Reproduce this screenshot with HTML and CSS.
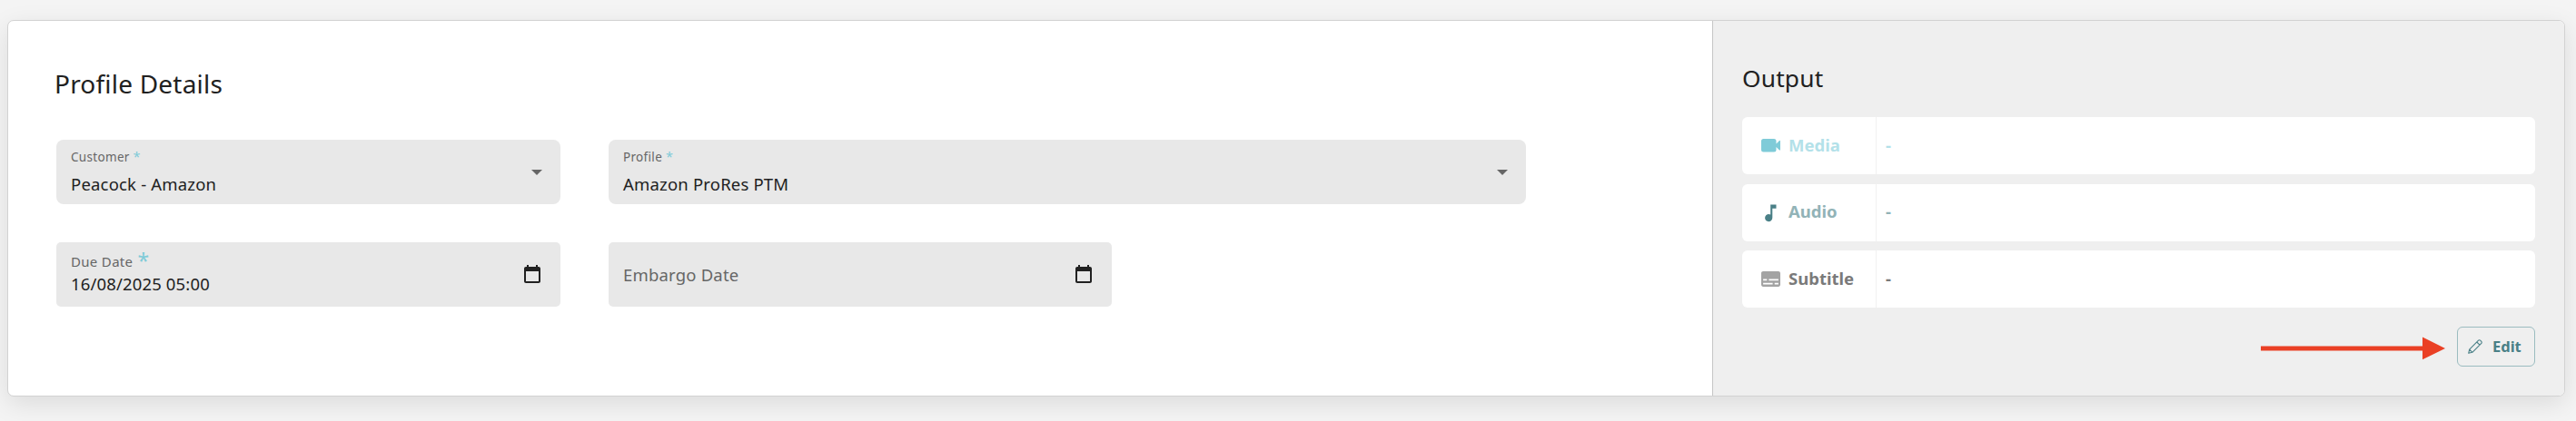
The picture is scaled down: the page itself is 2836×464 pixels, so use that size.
FILE: index.html
```html
<!DOCTYPE html>
<html lang="en">
<head>
<meta charset="utf-8">
<title>Profile Details</title>
<link rel="stylesheet" href="styles.css">
</head>
<body>
<main class="card">
  <section class="details">
    <h2 class="title">Profile Details</h2>
    <div class="fields">
      <div class="field select">
        <div class="text"><span class="label">Customer <i class="req">*</i></span><span class="value">Peacock - Amazon</span></div>
        <svg class="caret" viewBox="0 0 12 6"><path d="M0 0h12L6 6z"/></svg>
      </div>
      <div class="field select wide">
        <div class="text"><span class="label">Profile <i class="req">*</i></span><span class="value">Amazon ProRes PTM</span></div>
        <svg class="caret" viewBox="0 0 12 6"><path d="M0 0h12L6 6z"/></svg>
      </div>
      <div class="field date">
        <div class="text"><span class="label">Due Date <i class="req">*</i></span><span class="value">16/08/2025 05:00</span></div>
        <svg class="calendar" viewBox="0 0 24 24"><path d="M19 3h-1V1h-2v2H8V1H6v2H5c-1.11 0-1.99.9-1.99 2L3 19c0 1.1.89 2 2 2h14c1.1 0 2-.9 2-2V5c0-1.1-.9-2-2-2zm0 16H5V8h14v11z"/></svg>
      </div>
      <div class="field date">
        <span class="placeholder">Embargo Date</span>
        <svg class="calendar" viewBox="0 0 24 24"><path d="M19 3h-1V1h-2v2H8V1H6v2H5c-1.11 0-1.99.9-1.99 2L3 19c0 1.1.89 2 2 2h14c1.1 0 2-.9 2-2V5c0-1.1-.9-2-2-2zm0 16H5V8h14v11z"/></svg>
      </div>
    </div>
  </section>
  <aside class="output">
    <h2 class="title">Output</h2>
    <div class="rows">
      <div class="row media">
        <div class="kind"><svg class="icon" viewBox="0 0 21 21"><path d="M2.500 3h11.500a2.500 2.500 0 0 1 2.500 2.500V8.500L20 5a.6.6 0 0 1 1 .4v9.700a.6.6 0 0 1-1 .4l-3.500-3.500v3a2.500 2.500 0 0 1-2.500 2.500H2.500A2.500 2.500 0 0 1 0 15V5.500A2.500 2.500 0 0 1 2.500 3z"/></svg><b>Media</b></div><b class="amount">-</b>
      </div>
      <div class="row audio">
        <div class="kind"><svg class="icon" viewBox="0 0 21 21"><path d="M10.200 1.500h6.300v4.200h-4.200v10.400a4.100 4.100 0 1 1-2.100-3.600z"/></svg><b>Audio</b></div><b class="amount">-</b>
      </div>
      <div class="row subtitle">
        <div class="kind"><svg class="icon" viewBox="2 2 20 20"><path d="M20 4H4c-1.100 0-2 .9-2 2v12c0 1.100.9 2 2 2h16c1.100 0 2-.9 2-2V6c0-1.100-.9-2-2-2zM4 12h4v1.600H4V12zm10 5.600H4V16h10v1.600zm6 0h-4V16h4v1.600zm0-4H10V12h10v1.600z"/></svg><b>Subtitle</b></div><b class="amount">-</b>
      </div>
    </div>
    <div class="actions">
      <svg class="pointer" viewBox="0 0 204 26"><path d="M0 10.500h178V0.500l25 12.500-25 12.300v-9.800H0z"/></svg>
      <button class="edit"><svg class="pencil" viewBox="0 0 16 16"><path d="M.7 15.300l1-4.200L11.600 1.200a1.400 1.400 0 0 1 2 0l1.200 1.200a1.400 1.400 0 0 1 0 2L4.900 14.300zM9.800 3l3.200 3.200M1.700 11.100l3.200 3.200"/></svg><span>Edit</span></button>
    </div>
  </aside>
</main>
</body>
</html>
```
FILE: styles.css
```css
* { box-sizing: border-box; }
body {
  margin: 0;
  height: 464px;
  padding: 22px 12px 27px 8px;
  overflow: hidden;
  background: #f4f4f4;
  font-family: "Noto Sans", "Open Sans", sans-serif;
  color: #212121;
}
.card {
  display: flex;
  height: 415px;
  border: 1px solid #d2d2d2;
  border-radius: 7px;
  background: #fff;
  overflow: hidden;
  box-shadow: 0 8px 28px rgba(0, 0, 0, 0.1);
}
.details { width: 1876px; padding: 50px 0 0 53px; }
.title { margin: 0; font-size: 28px; line-height: 40px; font-weight: 400; letter-spacing: 0.0075em; }
.details .title { margin: -1px 0 42px -2px; }
.fields { display: grid; grid-template-columns: 555px 554px 403px; column-gap: 53px; row-gap: 42px; }
.field {
  height: 71px;
  display: flex;
  align-items: center;
  justify-content: space-between;
  padding: 0 20px 0 16px;
  border-radius: 8px;
  background: #e8e8e8;
}
.wide { grid-column: 2 / 4; }
.date { border-radius: 5px; }
.text { display: flex; flex-direction: column; letter-spacing: 0.02em; }
.label { font-size: 13.500px; line-height: 20px; color: #666; white-space: nowrap; }
.value, .placeholder { font-size: 18.500px; line-height: 26px; letter-spacing: 0.01em; }
.select .value { margin-top: 6.500px; }
.placeholder { color: #666; }
.req { font-style: normal; color: #7fcbd8; }
.select .req { font-size: 14.500px; line-height: 1px; }
.date .text { padding-bottom: 1px; }
.date .value { margin-top: 2px; letter-spacing: 0.008em; }
.date .label { font-size: 15px; }
.date .req { margin-left: 1px; font-size: 23px; line-height: 1px; vertical-align: -2px; }
.caret { width: 12px; height: 6px; fill: #666; }
.calendar { width: 24px; height: 24px; margin-right: -1px; fill: #212121; }
.output { flex: 1; padding: 43px 32px 0; border-left: 1px solid #c5c5c5; background: #efefef; }
.output .title { font-size: 26.300px; margin-bottom: 23px; }
.rows { display: grid; gap: 10.500px; }
.row { height: 63px; display: flex; align-items: center; border-radius: 6px; background: #fff; font-size: 18.500px; }
.kind { width: 148px; height: 100%; display: flex; align-items: center; gap: 9px; padding-left: 21px; border-right: 1px solid #f1f1f1; }
.icon { width: 21px; height: 21px; fill: currentColor; }
.row b { padding-bottom: 2px; font-weight: 700; line-height: 26px; }
.amount { margin-left: 10px; }
.media { color: #7fcbd8; }
.media b { color: #b3e1e9; }
.audio { color: #4a8087; }
.audio b { color: #92b3b7; }
.subtitle { color: #a3a3a3; }
.subtitle b { color: #7a7a7a; }
.actions { display: flex; justify-content: flex-end; align-items: center; gap: 12px; margin-top: 21px; }
.pointer { width: 204px; height: 26px; margin-top: 4px; fill: #ea4025; }
.edit {
  width: 86px;
  height: 44px;
  display: flex;
  align-items: center;
  gap: 11px;
  padding: 0 0 0 11px;
  border: 1px solid #9bbcc0;
  border-radius: 6px;
  background: transparent;
  color: #4a8087;
  font: 700 16.500px "Noto Sans", sans-serif;
}
.edit span { padding-bottom: 1px; }
.pencil { width: 16px; height: 16px; fill: none; stroke: currentColor; stroke-width: 1.1; stroke-linejoin: round; }
```
